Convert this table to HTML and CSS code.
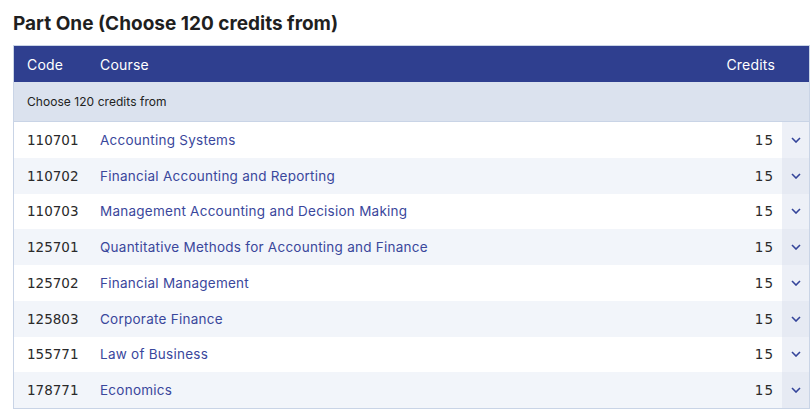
FILE: index.html
```html
<!DOCTYPE html>
<html lang="en">
<head>
<meta charset="utf-8">
<title>Part One</title>
<link rel="stylesheet" href="styles.css">
</head>
<body>
<h2 class="title">Part One (Choose 120 credits from)</h2>
<div class="table">
  <div class="row head">
    <div class="code">Code</div>
    <div class="course">Course</div>
    <div class="credits">Credits</div>
    <div class="toggle-head"></div>
  </div>
  <div class="sub">Choose 120 credits from</div>
  <div class="row">
    <div class="code">110701</div>
    <a class="course" href="#">Accounting Systems</a>
    <div class="credits">15</div>
    <div class="toggle"><svg width="10" height="6" viewBox="0 0 10 6"><path d="M1 1l4 4 4-4" fill="none" stroke="#34449a" stroke-width="1.6"/></svg></div>
  </div>
  <div class="row alt">
    <div class="code">110702</div>
    <a class="course" href="#">Financial Accounting and Reporting</a>
    <div class="credits">15</div>
    <div class="toggle"><svg width="10" height="6" viewBox="0 0 10 6"><path d="M1 1l4 4 4-4" fill="none" stroke="#34449a" stroke-width="1.6"/></svg></div>
  </div>
  <div class="row">
    <div class="code">110703</div>
    <a class="course" href="#">Management Accounting and Decision Making</a>
    <div class="credits">15</div>
    <div class="toggle"><svg width="10" height="6" viewBox="0 0 10 6"><path d="M1 1l4 4 4-4" fill="none" stroke="#34449a" stroke-width="1.6"/></svg></div>
  </div>
  <div class="row alt">
    <div class="code">125701</div>
    <a class="course" href="#">Quantitative Methods for Accounting and Finance</a>
    <div class="credits">15</div>
    <div class="toggle"><svg width="10" height="6" viewBox="0 0 10 6"><path d="M1 1l4 4 4-4" fill="none" stroke="#34449a" stroke-width="1.6"/></svg></div>
  </div>
  <div class="row">
    <div class="code">125702</div>
    <a class="course" href="#">Financial Management</a>
    <div class="credits">15</div>
    <div class="toggle"><svg width="10" height="6" viewBox="0 0 10 6"><path d="M1 1l4 4 4-4" fill="none" stroke="#34449a" stroke-width="1.6"/></svg></div>
  </div>
  <div class="row alt">
    <div class="code">125803</div>
    <a class="course" href="#">Corporate Finance</a>
    <div class="credits">15</div>
    <div class="toggle"><svg width="10" height="6" viewBox="0 0 10 6"><path d="M1 1l4 4 4-4" fill="none" stroke="#34449a" stroke-width="1.6"/></svg></div>
  </div>
  <div class="row">
    <div class="code">155771</div>
    <a class="course" href="#">Law of Business</a>
    <div class="credits">15</div>
    <div class="toggle"><svg width="10" height="6" viewBox="0 0 10 6"><path d="M1 1l4 4 4-4" fill="none" stroke="#34449a" stroke-width="1.6"/></svg></div>
  </div>
  <div class="row alt">
    <div class="code">178771</div>
    <a class="course" href="#">Economics</a>
    <div class="credits">15</div>
    <div class="toggle"><svg width="10" height="6" viewBox="0 0 10 6"><path d="M1 1l4 4 4-4" fill="none" stroke="#34449a" stroke-width="1.6"/></svg></div>
  </div>
</div>
</body>
</html>
```

FILE: styles.css
```css
html, body {
  margin: 0;
  padding: 0;
  background: #ffffff;
}
body {
  padding: 11px 3px 0 13px;
  font-family: Inter, "Noto Sans", Arial, sans-serif;
  color: #222222;
}
.title {
  margin: 0 0 9px 0;
  font-size: 19px;
  font-weight: 700;
  line-height: 25px;
  color: #1f1f1f;
  letter-spacing: 0;
}
.table {
  border: 1px solid #c9d4e6;
  width: 795px;
}
.row {
  display: grid;
  grid-template-columns: 73px 1fr auto 27px;
  align-items: center;
  height: 35.75px;
  padding-left: 13px;
  font-size: 13.5px;
  letter-spacing: 0.25px;
  background: #ffffff;
}
.row.alt {
  background: #f2f5fa;
}
.row.head {
  height: 36px;
  background: #2f3f8f;
  color: #ffffff;
  font-size: 14px;
  letter-spacing: 0.2px;
}
.sub {
  height: 39px;
  display: flex;
  align-items: center;
  padding-left: 13px;
  background: #dbe2ee;
  font-size: 12px;
  letter-spacing: 0.05px;
  color: #222222;
  border-bottom: 1px solid #c9d4e6;
}
.code {
  color: #2a2a2a;
  font-family: "DejaVu Sans", Inter, sans-serif;
  font-size: 13.5px;
  letter-spacing: 0;
}
.credits {
  text-align: right;
  padding-right: 8px;
  color: #2a2a2a;
  font-family: "DejaVu Sans", Inter, sans-serif;
  font-size: 13.5px;
  letter-spacing: 1px;
}
.head .code, .head .course, .head .credits {
  color: #ffffff;
  font-family: Inter, "Noto Sans", Arial, sans-serif;
  font-size: 14px;
  letter-spacing: 0.2px;
}
.head .credits {
  padding-right: 7px;
}
.course {
  color: #3a479c;
  text-decoration: none;
}
.toggle {
  height: 100%;
  display: flex;
  align-items: center;
  justify-content: center;
  background: #edf0f7;
}
.alt .toggle {
  background: #e6eaf3;
}
.toggle svg {
  display: block;
}
```
